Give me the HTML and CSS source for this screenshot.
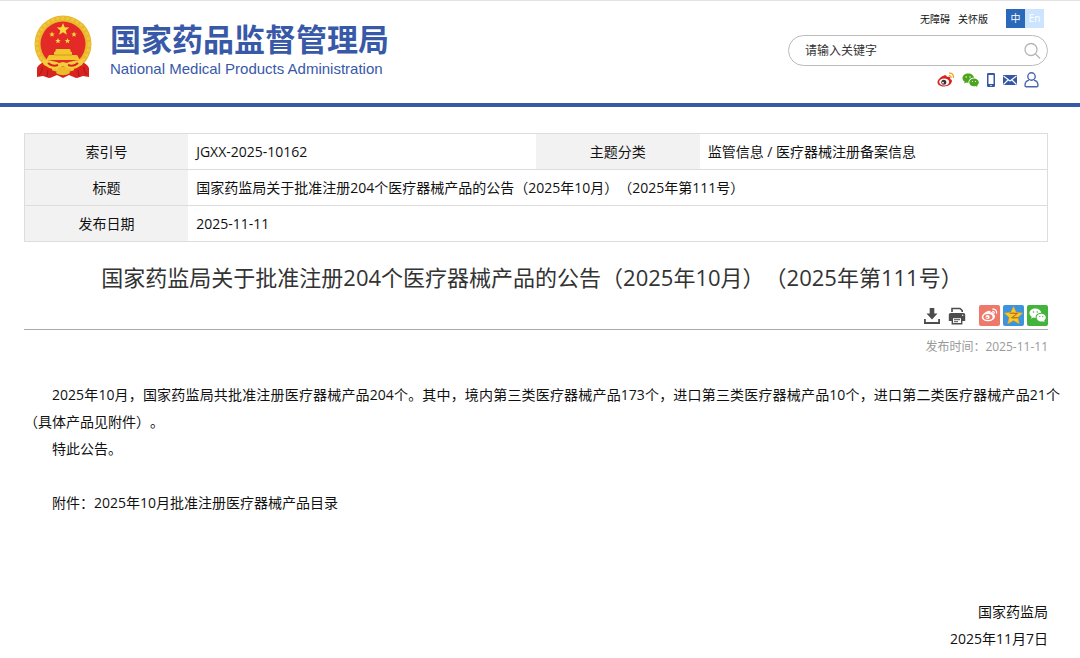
FILE: index.html
```
<!DOCTYPE html>
<html lang="zh-CN">
  <head>
    <meta charset="UTF-8" />
    <meta name="viewport" content="width=device-width, initial-scale=1.0" />
    <title>国家药品监督管理局</title>
    <link rel="stylesheet" href="styles.css">
  </head>
  <body>
    <header class="header">
      <a class="logo" href="#">
        <svg class="emblem" viewBox="0 0 58 64" aria-hidden="true">
          <path d="M10 46 L3 55 V61 L9 60 L16 63 L23 60 L29 63 L35 60 L42 63 L49 60 L55 61 V55 L48 46Z" fill="#d8231f" />
          <circle cx="29" cy="29" r="28.500" fill="#e9b82c" />
          <circle cx="29" cy="29" r="26" fill="none" stroke="#f0c63c" stroke-width="3" stroke-dasharray="3 2" />
          <circle cx="29" cy="29" r="22.500" fill="#e32a26" />
          <path d="M29 8l1.700 4.200 4.500.3-3.500 2.900 1.200 4.400-3.900-2.500-3.900 2.500 1.200-4.400-3.500-2.900 4.500-.3z" fill="#fbd83b" />
          <path id="s" d="M18 16.500l.8 1.900 2 .1-1.600 1.300.5 2-1.700-1.100-1.700 1.100.5-2-1.600-1.300 2-.1z" fill="#fbd83b" />
          <use href="#s" x="22" />
          <use href="#s" x="6" y="6.500" />
          <use href="#s" x="15.500" y="6.500" />
          <path d="M22 34h14l1 3h1v3h5l3 5H12l3-5h5v-3h1z" fill="#f3c52f" />
          <path d="M20 40h18" stroke="#d69a1c" />
          <path d="M3 53c2-4 5-6 9-5l6 3v8l-3 4-6-2-6 1zM55 53c-2-4-5-6-9-5l-6 3v8l3 4 6-2 6 1z" fill="#d8231f" />
          <path d="M9 44c8 2 12 2 16 4l4-1 4 1c4-2 8-2 16-4 1 3 0 6-3 7-4 3-8 4-12 2l-5-2-5 2c-4 2-8 1-12-2-3-1-4-4-3-7z" fill="#f5cd3c" />
          <path d="M14 48c3 3 7 3 10 2M44 48c-3 3-7 3-10 2" fill="none" stroke="#d8231f" stroke-width="2" />
          <path d="M22 58l2-4 3 1 2-3 2 3 3-1 2 4c-5 3-9 3-14 0z" fill="#edba2b" />
          <path d="M8 52c0 4-1 6-3 8M50 52c0 4 1 6 3 8M14 55l-1 7M44 55l1 7" fill="none" stroke="#a9161b" />
        </svg>
        <span class="logo-text">
          <strong class="logo-name">国家药品监督管理局</strong>
          <span class="logo-en">National Medical Products Administration</span>
        </span>
      </a>

      <div class="header-side">
        <nav class="top-links">
          <a href="#">无障碍</a>
          <a href="#">关怀版</a>
          <span class="lang">
            <a class="lang-item active" href="#">中</a>
            <a class="lang-item" href="#">En</a>
          </span>
        </nav>
        <form class="search">
          <input class="search-input" type="text" aria-label="搜索" placeholder="请输入关键字" />
          <button class="search-button" type="submit" aria-label="搜索">
            <svg width="18" height="18" viewBox="0 0 18 18" fill="none" stroke="#b5b5b5" stroke-width="1.300">
              <circle cx="8" cy="7.500" r="6" />
              <path d="M12.500 12l4.500 4.500" />
            </svg>
          </button>
        </form>
        <nav class="social">
          <a href="#" aria-label="微博">
            <svg width="18" height="16" viewBox="0 0 18 16">
              <path d="M7 3.500c2-.9 3.200 0 2.700 1.600 2.400-.9 4.300 0 3.500 1.800 1.400.5 2 1.300 1.600 2.900C14 12.500 11 14.500 7.200 14.500 3.200 14.500.5 12.600.5 10.200.5 7.600 4.300 4.300 7 3.500z" fill="#d9201f" />
              <ellipse cx="7.200" cy="10" rx="5" ry="3.400" fill="#fff" />
              <circle cx="6.800" cy="10.200" r="2.500" fill="#333" />
              <circle cx="6" cy="10.700" r=".9" fill="#fff" />
              <path d="M12 1.200c3-.5 5 1.700 4.400 4.800M11.900 3.700c1.600-.2 2.400.7 2.200 2.200" fill="none" stroke="#eba726" stroke-width="1.300" />
            </svg>
          </a>
          <a href="#" aria-label="微信">
            <svg width="17" height="16" viewBox="0 0 17 16">
              <path d="M6.200 1.500c3.200 0 5.600 1.900 5.800 4.300-3.500 0-5.900 2.100-5.400 5-.9 0-1.700-.1-2.400-.4l-2.100 1.100.5-2C1.200 8.700.5 7.500.5 6.200c0-2.600 2.500-4.700 5.700-4.700z" fill="#4ca51d" />
              <path d="M12 6.600c2.700 0 4.800 1.700 4.800 3.900 0 1.200-.7 2.200-1.700 2.900l.4 1.500-1.800-.9c-3.500.9-6.400-.9-6.400-3.500 0-2.200 2-3.900 4.700-3.900z" fill="#4ca51d" />
              <g fill="#fff"><circle cx="4.200" cy="5" r=".7" /><circle cx="8" cy="5" r=".7" /><circle cx="10.500" cy="9.500" r=".6" /><circle cx="13.500" cy="9.500" r=".6" /></g>
            </svg>
          </a>
          <a href="#" aria-label="移动端">
            <svg width="10" height="16" viewBox="0 0 10 16">
              <rect x="1" y="1" width="8" height="14" rx="1.200" fill="#3557a8" />
              <path d="M2.500 3h5v9h-5z" fill="#fff" />
              <path d="M4.300 13.500h1.400" stroke="#fff" />
            </svg>
          </a>
          <a href="#" aria-label="邮箱">
            <svg width="14" height="16" viewBox="0 0 14 16">
              <rect y="3" width="14" height="10" fill="#3557a8" />
              <path d="M.5 4l6.500 5 6.500-5M.5 12.500L5 8M13.500 12.500L9 8" fill="none" stroke="#fff" stroke-width="1.100" />
            </svg>
          </a>
          <a href="#" aria-label="个人中心">
            <svg width="15" height="16" viewBox="0 0 15 16" fill="none" stroke="#4966b2" stroke-width="1.400">
              <circle cx="7.500" cy="4.500" r="3.700" />
              <path d="M5 8.200C2.200 9 1 11 1 13.300c0 1.200.3 1.500 1.300 1.500h10.400c1 0 1.300-.3 1.300-1.500 0-2.300-1.200-4.300-4-5.100" />
            </svg>
          </a>
        </nav>
      </div>
    </header>

    <main class="container">
      <table class="info">
        <tr>
          <th>索引号</th>
          <td>JGXX-2025-10162</td>
          <th>主题分类</th>
          <td>监管信息 / 医疗器械注册备案信息</td>
        </tr>
        <tr>
          <th>标题</th>
          <td colspan="3">国家药监局关于批准注册204个医疗器械产品的公告（2025年10月）（2025年第111号）</td>
        </tr>
        <tr>
          <th>发布日期</th>
          <td colspan="3">2025-11-11</td>
        </tr>
      </table>

      <h1>国家药监局关于批准注册204个医疗器械产品的公告（2025年10月）（2025年第111号）</h1>

      <div class="tools">
        <button class="tool" type="button" aria-label="下载">
          <svg width="16" height="18" viewBox="0 0 16 18" fill="#4d4d4d">
            <path d="M5.700 1h4.600v5.500h3.200L8 12.500 2.500 6.500h3.200z" />
            <path d="M0 12h1.800v3h12.400v-3H16v5H0z" />
          </svg>
        </button>
        <button class="tool" type="button" aria-label="打印">
          <svg width="18" height="18" viewBox="0 0 18 18">
            <path d="M4 5V1.500h8L14.200 3.500V5" fill="none" stroke="#4d4d4d" stroke-width="1.600" />
            <path d="M2.500 6h13A1.700 1.700 0 0 1 17.200 7.700V14H14v-3.500H4V14H.8V7.700A1.700 1.700 0 0 1 2.500 6z" fill="#4d4d4d" />
            <path d="M4.300 10.500h9.400v6.200H4.300z" fill="#fff" stroke="#4d4d4d" stroke-width="1.400" />
            <path d="M6 12.700h6M6 14.700h4" stroke="#4d4d4d" />
            <circle cx="14.700" cy="8.300" r=".7" fill="#fff" />
          </svg>
        </button>
        <a class="share weibo" href="#" aria-label="分享到微博">
          <svg width="21" height="21" viewBox="0 0 21 21">
            <path d="M9 6c2-.9 3 0 2.500 1.500 2.200-.8 3.700 0 3 1.700 1.500.5 1.800 1.400 1.500 2.500-.7 2.800-3.600 4.600-7 4.600-3.700 0-6.200-1.700-6.200-4C2.800 9.800 6.500 6.600 9 6z" fill="#fff" />
            <ellipse cx="9" cy="12" rx="4.600" ry="3" fill="#ee7869" />
            <circle cx="8.600" cy="12.100" r="2.100" fill="#fff" />
            <circle cx="8" cy="12.500" r=".8" fill="#ee7869" />
            <path d="M13.300 4.200c3-.5 4.800 1.500 4.200 4.500M13.300 6.500c1.500-.2 2.200.6 2 2" fill="none" stroke="#fff" stroke-width="1.200" />
          </svg>
        </a>
        <a class="share qzone" href="#" aria-label="分享到QQ空间">
          <svg width="21" height="21" viewBox="0 0 21 21">
            <path d="M10.500 1.500l2.700 5.900 6.400.7-4.800 4.300 1.400 6.300-5.700-3.200-5.700 3.200 1.400-6.300-4.800-4.300 6.400-.7z" fill="#fcc928" stroke="#e8a41c" stroke-width=".6" />
            <path d="M6.800 8.500c2.700-.5 5-.4 7.200.1l-5 4c2 .4 3.800.4 5.800-.2" fill="none" stroke="#b87318" stroke-width="1.200" />
          </svg>
        </a>
        <a class="share wechat" href="#" aria-label="分享到微信">
          <svg width="21" height="21" viewBox="0 0 21 21">
            <path d="M8.400 3.500c3.200 0 5.500 1.900 5.800 4.200-3.600.1-6 2.300-5.500 5.200-.8 0-1.600 0-2.300-.3L4.200 13.800l.5-2.100C3.300 10.900 2.500 9.600 2.500 8.200c0-2.600 2.600-4.700 5.900-4.700z" fill="#fff" />
            <path d="M14.200 8.700c2.600 0 4.600 1.700 4.600 3.800 0 1.200-.7 2.200-1.600 2.900l.4 1.700-1.800-.9c-3.400.9-6.200-1-6.200-3.700 0-2.100 2-3.800 4.600-3.800z" fill="#fff" />
            <g fill="#42b43c"><circle cx="6.500" cy="7" r=".8" /><circle cx="10.200" cy="7" r=".8" /><circle cx="12.800" cy="11.600" r=".7" /><circle cx="15.700" cy="11.600" r=".7" /></g>
          </svg>
        </a>
      </div>

      <p class="publish-time">发布时间：2025-11-11</p>

      <article class="article">
        <p>2025年10月，国家药监局共批准注册医疗器械产品204个。其中，境内第三类医疗器械产品173个，进口第三类医疗器械产品10个，进口第二类医疗器械产品21个（具体产品见附件）。</p>
        <p>特此公告。</p>
        <p class="attachment">附件：<a href="#">2025年10月批准注册医疗器械产品目录</a></p>
        <div class="signature">
          <p>国家药监局</p>
          <p>2025年11月7日</p>
        </div>
      </article>
    </main>
  </body>
</html>
```

FILE: styles.css
```
* {
  box-sizing: border-box;
}
body {
  margin: 0;
  font-family: "Open Sans", "Noto Sans CJK SC", sans-serif;
  font-size: 14px;
  color: #111;
  background-color: #fff;
  text-spacing-trim: space-all;
}
a {
  color: inherit;
  text-decoration: none;
}
p {
  margin: 0;
}
button {
  padding: 0;
  border: none;
  background: none;
  cursor: pointer;
}
svg {
  display: block;
}

/* header */
.header {
  display: flex;
  justify-content: space-between;
  align-items: flex-start;
  height: 107px;
  padding: 8px 32px 0 34px;
  border-top: 1px solid #e3e3e3;
  border-bottom: 4px solid #3859a8;
}
.logo {
  display: flex;
  gap: 18px;
  padding-top: 6px;
  color: #3859a8;
}
.emblem {
  width: 58px;
  height: 64px;
}
.logo-text {
  display: flex;
  flex-direction: column;
  padding-top: 6px;
}
.logo-name {
  font-family: "Noto Sans CJK SC", sans-serif;
  font-size: 31px;
  line-height: 34px;
}
.logo-en {
  font-family: "Liberation Sans", Arial, sans-serif;
  font-size: 15px;
  line-height: 28px;
}
.header-side {
  width: 260px;
}
.top-links {
  display: flex;
  justify-content: flex-end;
  align-items: center;
  gap: 8px;
  padding-right: 4px;
  font-size: 10px;
}
.lang {
  display: flex;
  margin-left: 10px;
}
.lang-item {
  width: 19px;
  line-height: 19px;
  text-align: center;
  color: #fff;
  background-color: #cce4ff;
}
.lang-item.active {
  background-color: #2a68b9;
}
.search {
  display: flex;
  align-items: center;
  height: 31px;
  margin-top: 7px;
  padding: 0 6px 0 16px;
  border: 1px solid #bbb;
  border-radius: 16px;
}
.search-input {
  flex: 1;
  min-width: 0;
  padding: 0;
  border: none;
  outline: none;
  background: none;
  font-family: inherit;
  font-size: 12px;
}
.search-input::placeholder {
  color: #333;
}
.social {
  display: flex;
  justify-content: flex-end;
  gap: 7px;
  margin-top: 6px;
  padding-right: 9px;
}

/* document info */
.container {
  padding: 26px 32px 0 24px;
}
.info {
  width: 100%;
  table-layout: fixed;
  border-collapse: collapse;
  border: 1px solid #ddd;
}
.info tr {
  border-bottom: 1px solid #ddd;
}
.info th,
.info td {
  height: 36px;
  padding: 0 8px;
  line-height: 20px;
}
.info th {
  width: 16%;
  font-weight: normal;
  background-color: #f2f2f2;
}
.info td {
  text-align: left;
}
h1 {
  margin: 18px 8px 0 0;
  font-size: 22px;
  font-weight: normal;
  line-height: 34px;
  text-align: center;
  color: #333;
}
.tools {
  display: flex;
  justify-content: flex-end;
  align-items: center;
  gap: 3px;
  margin-top: 11px;
  padding-bottom: 3px;
  border-bottom: 1px solid #aaa;
}
.tool {
  margin-right: 5px;
}
.share {
  border-radius: 2px;
}
.weibo {
  margin-left: 5px;
  background-color: #ee7869;
}
.qzone {
  background-color: #3d93dc;
}
.wechat {
  background-color: #42b43c;
}
.publish-time {
  margin-top: 7px;
  font-size: 12px;
  line-height: 20px;
  text-align: right;
  color: #999;
}

/* article */
.article {
  margin: 24px -12px 0 0;
  line-height: 27px;
  text-align: justify;
}
.article p {
  text-indent: 2em;
}
.article .attachment {
  margin-top: 27px;
}
.signature {
  margin-top: 82px;
  padding-right: 12px;
  text-align: right;
}
```
